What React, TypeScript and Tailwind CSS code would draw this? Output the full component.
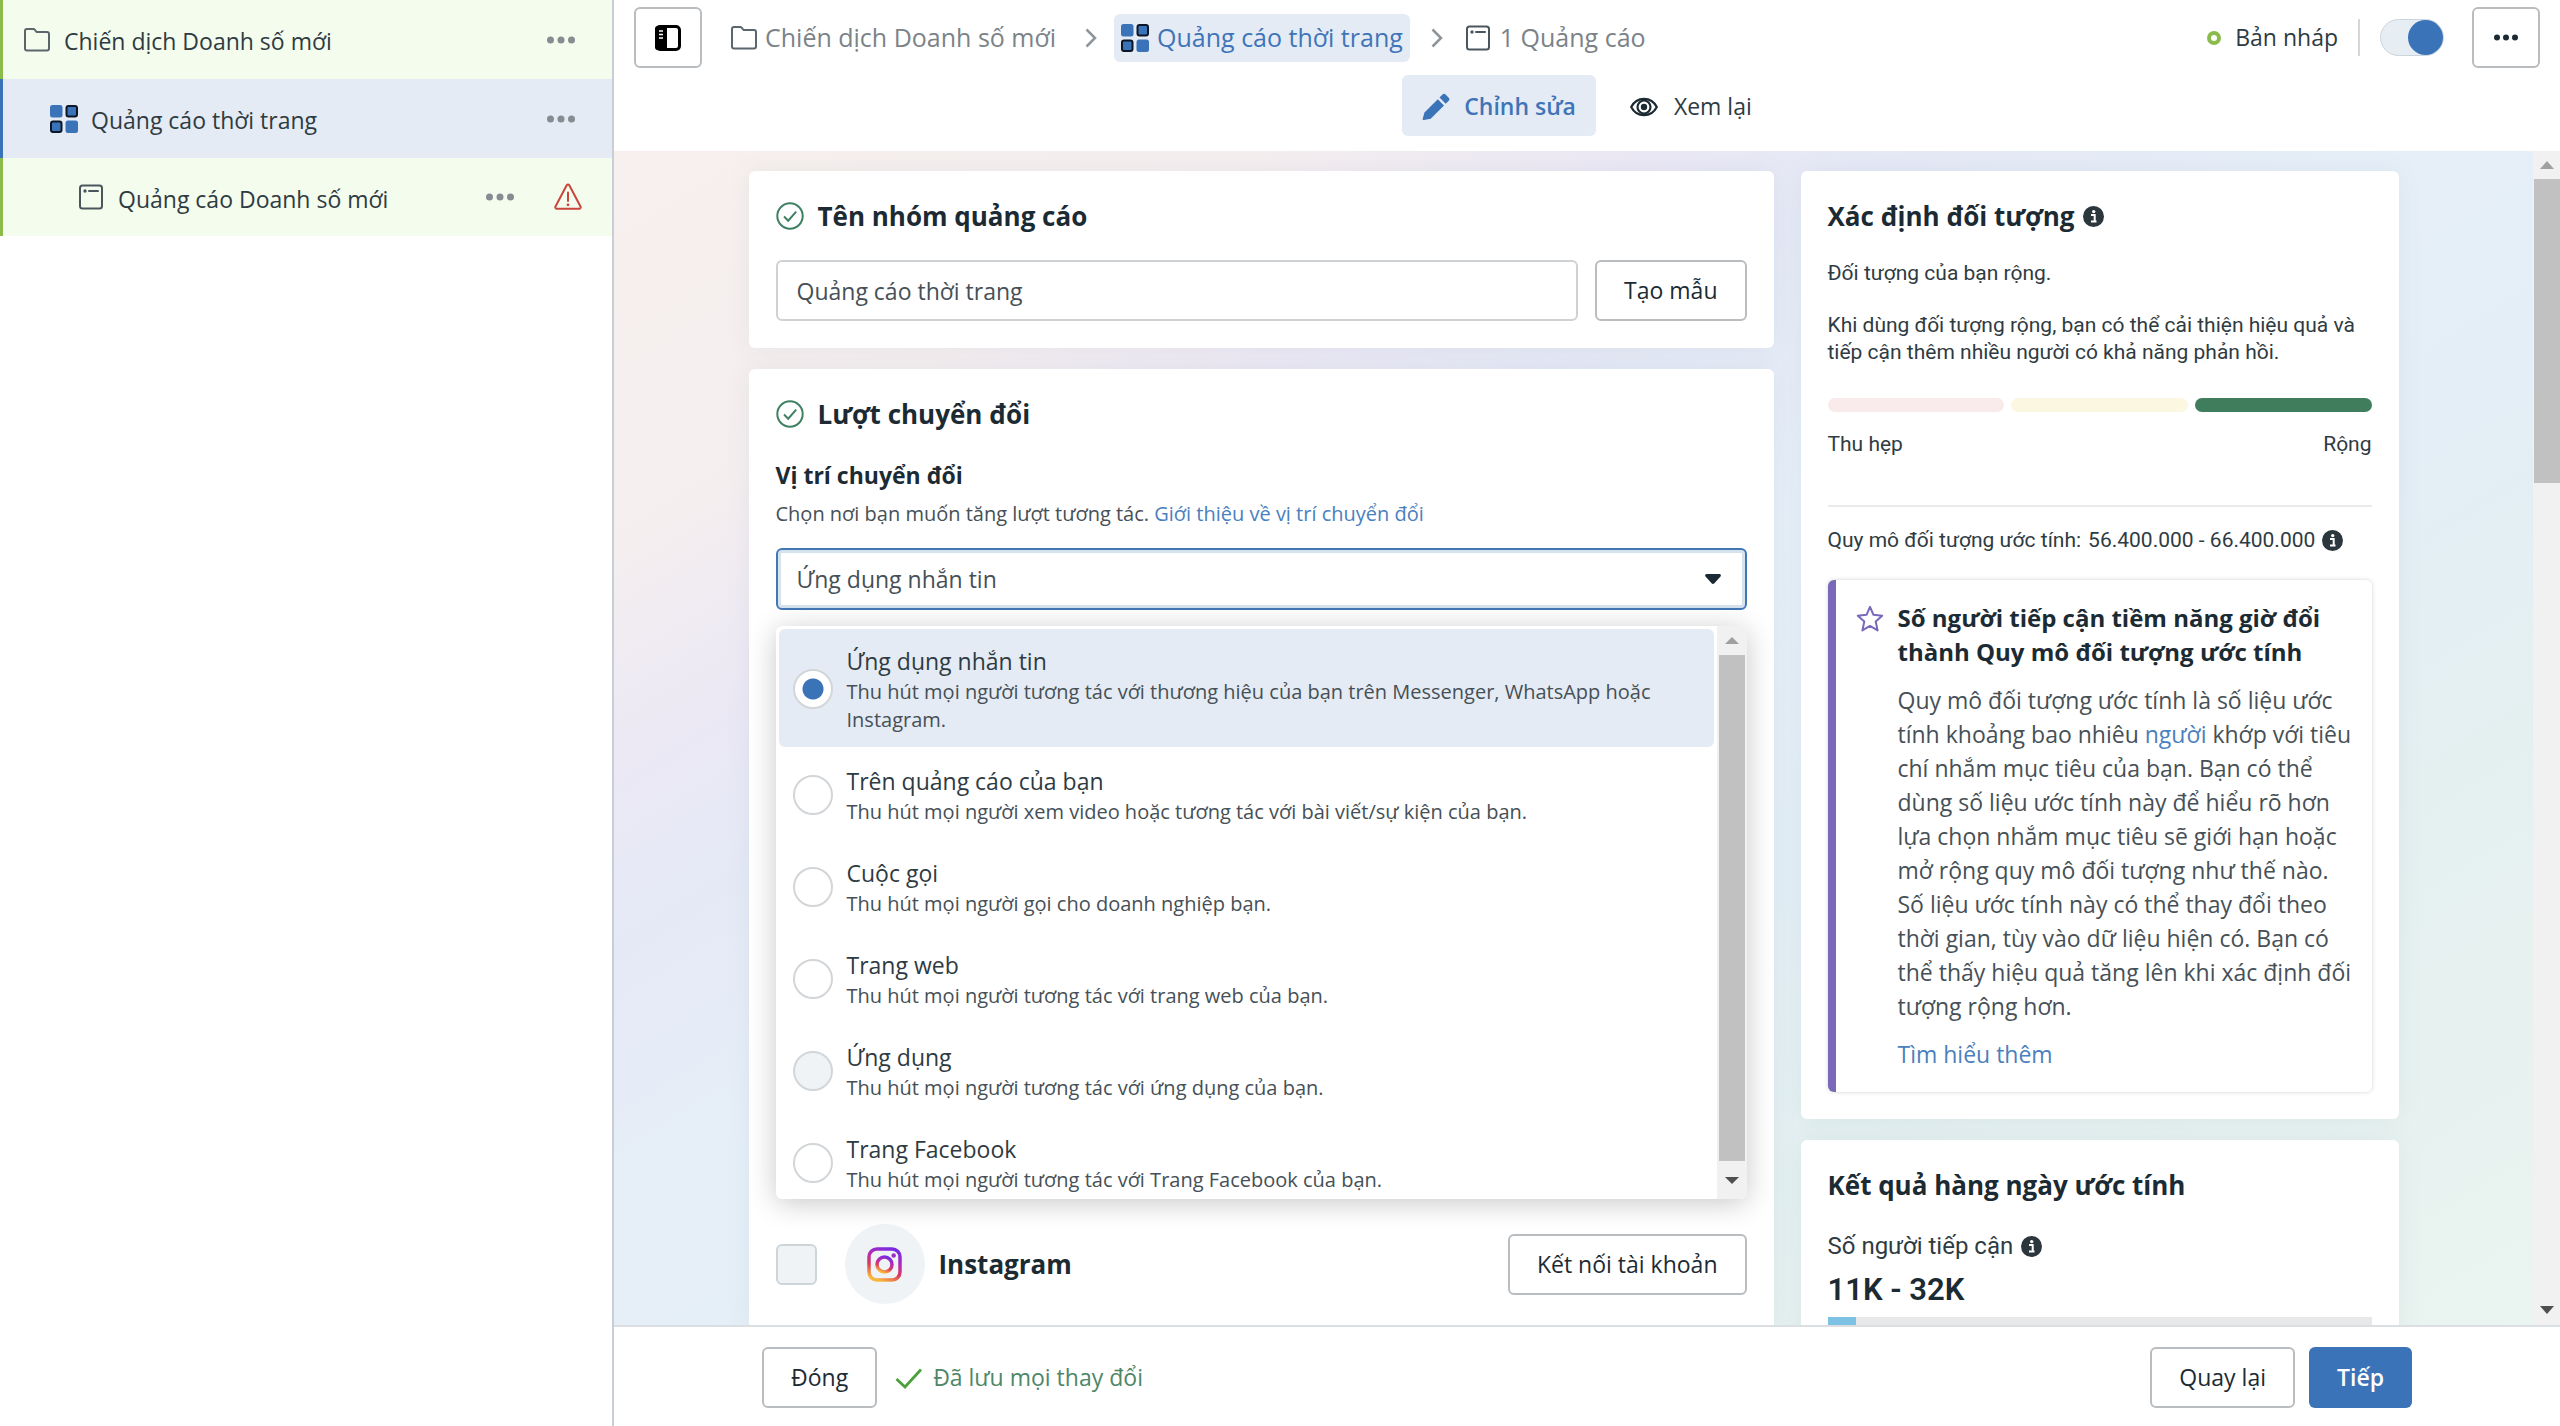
import { useState } from 'react';
import type { ReactNode } from 'react';

const OPTIONS = [
  {
    id: 'messaging',
    title: 'Ứng dụng nhắn tin',
    text: 'Thu hút mọi người tương tác với thương hiệu của bạn trên Messenger, WhatsApp hoặc Instagram.',
  },
  {
    id: 'on-ad',
    title: 'Trên quảng cáo của bạn',
    text: 'Thu hút mọi người xem video hoặc tương tác với bài viết/sự kiện của bạn.',
  },
  { id: 'calls', title: 'Cuộc gọi', text: 'Thu hút mọi người gọi cho doanh nghiệp bạn.' },
  { id: 'website', title: 'Trang web', text: 'Thu hút mọi người tương tác với trang web của bạn.' },
  { id: 'app', title: 'Ứng dụng', text: 'Thu hút mọi người tương tác với ứng dụng của bạn.', disabled: true },
  { id: 'page', title: 'Trang Facebook', text: 'Thu hút mọi người tương tác với Trang Facebook của bạn.' },
];

/* Icons */

function FolderIcon() {
  return (
    <svg className="w-7 h-7 shrink-0" viewBox="0 0 28 28" fill="none" stroke="#5b666c" strokeWidth="2" strokeLinejoin="round">
      <path d="M2 22.500V5a2 2 0 0 1 2-2h6.200a2 2 0 0 1 1.500.7L13.500 6H24a2 2 0 0 1 2 2v14.500a2 2 0 0 1-2 2H4a2 2 0 0 1-2-2Z" />
    </svg>
  );
}

function GridIcon() {
  return (
    <svg className="w-7 h-7 shrink-0" viewBox="0 0 28 28" fill="#3b73b9">
      <rect x="0" y="0" width="12.500" height="12.500" rx="2.500" />
      <rect x="16.500" y="1" width="10.500" height="10.500" rx="2" stroke="#0b1626" strokeWidth="2" />
      <rect x="1" y="16.500" width="10.500" height="10.500" rx="2" stroke="#0b1626" strokeWidth="2" />
      <rect x="15.500" y="15.500" width="12.500" height="12.500" rx="2.500" />
    </svg>
  );
}

function AdIcon() {
  return (
    <svg className="w-7 h-7 shrink-0" viewBox="0 0 28 28" fill="none" stroke="#4b565c" strokeWidth="2">
      <rect x="3" y="2.500" width="22" height="23" rx="2.500" />
      <circle cx="8" cy="8" r="1.700" fill="#4b565c" stroke="none" />
      <path d="M12 8h9" strokeLinecap="round" />
    </svg>
  );
}

function DotsIcon({ color, size }: { color: string; size: string }) {
  return (
    <svg className={`${size} shrink-0`} viewBox="0 0 28 8" fill={color}>
      <circle cx="3.500" cy="4" r="3.500" />
      <circle cx="14" cy="4" r="3.500" />
      <circle cx="24.500" cy="4" r="3.500" />
    </svg>
  );
}

function WarningIcon() {
  return (
    <svg className="w-7 h-7 shrink-0" viewBox="0 0 28 28" fill="none" stroke="#c9463d" strokeWidth="2" strokeLinejoin="round">
      <path d="M12.700 2.200a1.500 1.500 0 0 1 2.600 0l11.200 21.300a1.500 1.500 0 0 1-1.300 2.200H2.800a1.500 1.500 0 0 1-1.300-2.200Z" />
      <path d="M14 9.500v8.500" strokeLinecap="round" />
      <circle cx="14" cy="21.800" r="1.400" fill="#c9463d" stroke="none" />
    </svg>
  );
}

function PanelIcon() {
  return (
    <svg className="w-7 h-7" viewBox="0 0 28 28">
      <rect x="2.500" y="2.500" width="23" height="23" rx="3.500" fill="#fff" stroke="#000" strokeWidth="3" />
      <path d="M4 2h9v24H4a3 3 0 0 1-3-3V5a3 3 0 0 1 3-3Z" fill="#000" />
      <path d="M5 7h4M5 10.500h4M5 14h4" stroke="#fff" strokeWidth="1.600" />
    </svg>
  );
}

function ChevronIcon() {
  return (
    <svg className="w-3 h-5 shrink-0" viewBox="0 0 12 20" fill="none" stroke="#8d959a" strokeWidth="2.500">
      <path d="M1.500 1.500 10 10l-8.500 8.500" />
    </svg>
  );
}

function PencilIcon() {
  return (
    <svg className="w-7 h-7" viewBox="0 0 28 28" fill="#3b73b9">
      <path d="M2.500 19.500 15.800 6.200l6.200 6.200L8.700 25.700 1.800 27a1 1 0 0 1-1.100-1.200Z" />
      <path d="M17.500 4.500 20.300 1.700a2.500 2.500 0 0 1 3.500 0l2.700 2.700a2.500 2.500 0 0 1 0 3.500l-2.800 2.800Z" />
    </svg>
  );
}

function EyeIcon() {
  return (
    <svg className="w-7 h-7" viewBox="0 0 28 28" fill="none" stroke="#1c2b33" strokeWidth="2.200">
      <path d="M1.200 14C4 8.500 8.500 5.800 14 5.800S24 8.500 26.800 14C24 19.500 19.500 22.200 14 22.200S4 19.500 1.200 14Z" />
      <circle cx="14" cy="14" r="6.500" />
      <circle cx="14" cy="14" r="3.200" fill="#1c2b33" stroke="none" />
    </svg>
  );
}

function CheckCircleIcon() {
  return (
    <svg className="w-7 h-7 shrink-0" viewBox="0 0 28 28" fill="none" stroke="#3f8062" strokeWidth="2">
      <circle cx="14" cy="14" r="12.700" />
      <path d="m8 14.500 4.200 4.200 8-9" />
    </svg>
  );
}

function InfoIcon() {
  return (
    <svg className="w-[21px] h-[21px] shrink-0" viewBox="0 0 21 21">
      <circle cx="10.500" cy="10.500" r="10.500" fill="#2b373d" />
      <circle cx="10.700" cy="5.600" r="1.700" fill="#fff" />
      <path d="M8 9h3.700v6M8 15.500h5.500" stroke="#fff" strokeWidth="2" fill="none" />
    </svg>
  );
}

function StarIcon() {
  return (
    <svg className="w-7 h-7 shrink-0" viewBox="0 0 28 28" fill="none" stroke="#7a68bb" strokeWidth="2" strokeLinejoin="round">
      <path d="m14 1.800 3.500 8 8.700.9-6.500 5.800 1.900 8.900-7.600-4.500-7.600 4.500 1.900-8.900-6.500-5.800 8.700-.9Z" />
    </svg>
  );
}

function InstagramIcon() {
  return (
    <svg className="w-[35px] h-[35px]" viewBox="0 0 35 35" fill="none" stroke="url(#ig)" strokeWidth="3.500">
      <defs>
        <linearGradient id="ig" x1="0.700" y1="0" x2="0.300" y2="1">
          <stop offset="0" stopColor="#7a2be0" />
          <stop offset="0.350" stopColor="#b52bb5" />
          <stop offset="0.650" stopColor="#dd3a5c" />
          <stop offset="1" stopColor="#f8b83c" />
        </linearGradient>
      </defs>
      <rect x="2" y="2" width="31" height="31" rx="8" />
      <circle cx="17.500" cy="17.500" r="7.500" />
      <circle cx="26.700" cy="8.500" r="2.200" fill="#a02bc8" stroke="none" />
    </svg>
  );
}

/* Shared parts */

function Card({ children }: { children: ReactNode }) {
  return <section className="bg-white rounded-md p-[27px] shadow-[0_0_24px_rgba(90,110,140,0.08)]">{children}</section>;
}

function OutlineButton({ children }: { children: ReactNode }) {
  return (
    <button className="h-[61px] px-[27px] shrink-0 rounded-md border-2 border-[#b9bdc0] bg-white text-[23px] font-medium text-[#1c2b33]">
      {children}
    </button>
  );
}

function SectionTitle({ children }: { children: ReactNode }) {
  return (
    <h2 className="flex items-center gap-[14px] h-9 text-[26px] font-bold text-[#1c2b33]">
      <CheckCircleIcon />
      {children}
    </h2>
  );
}

function Sidebar() {
  return (
    <nav className="w-[614px] shrink-0 border-r-2 border-[#c8ced6] bg-white text-[23px] text-[#2f3b42]">
      <div className="flex items-center h-[79px] border-l-3 border-[#8abb4b] bg-[#f4fcee] pl-5 pr-[37px]">
        <FolderIcon />
        <a href="#campaign" className="ml-[13px] pt-1 flex-1">Chiến dịch Doanh số mới</a>
        <button aria-label="Tùy chọn chiến dịch"><DotsIcon color="#858d92" size="w-7 h-2" /></button>
      </div>
      <div className="flex items-center h-[79px] border-l-3 border-[#3b73b9] bg-[#e4ebf4] pl-[47px] pr-[37px]">
        <GridIcon />
        <a href="#adset" className="ml-[13px] pt-1 flex-1">Quảng cáo thời trang</a>
        <button aria-label="Tùy chọn nhóm quảng cáo"><DotsIcon color="#858d92" size="w-7 h-2" /></button>
      </div>
      <div className="flex items-center h-[78px] border-l-3 border-[#8abb4b] bg-[#f4fcee] pl-[74px] pr-[30px]">
        <AdIcon />
        <a href="#ad" className="ml-[13px] pt-1 flex-1">Quảng cáo Doanh số mới</a>
        <button aria-label="Tùy chọn quảng cáo"><DotsIcon color="#858d92" size="w-7 h-2" /></button>
        <span className="ml-[40px]"><WarningIcon /></span>
      </div>
    </nav>
  );
}

function Header() {
  return (
    <header className="h-[151px] shrink-0 bg-white px-5">
      <div className="flex items-center h-[75px]">
        <button aria-label="Thu gọn bảng" className="flex items-center justify-center w-[68px] h-[61px] rounded-md border-2 border-[#b9bdc0]">
          <PanelIcon />
        </button>
        <nav className="flex items-center ml-7 text-[25px] font-medium text-[#7b8388]">
          <a href="#campaign" className="flex items-center gap-[7px]">
            <FolderIcon />
            Chiến dịch Doanh số mới
          </a>
          <span className="mx-[17px] pl-3"><ChevronIcon /></span>
          <a href="#adset" className="flex items-center gap-2 h-12 px-[7px] rounded-md bg-[#e4ebf4] text-[#3f75b8]">
            <GridIcon />
            Quảng cáo thời trang
          </a>
          <span className="mx-5 px-px"><ChevronIcon /></span>
          <a href="#ad" className="flex items-center gap-2">
            <AdIcon />
            1 Quảng cáo
          </a>
        </nav>
        <div className="ml-auto flex items-center text-[23px] text-[#2f3b42]">
          <span className="w-[14px] h-[14px] rounded-full border-4 border-[#8abb4b] mr-[14px]" />
          Bản nháp
          <span className="w-[2px] h-[37px] bg-[#d3d7da] mx-5" />
          <input
            type="checkbox"
            role="switch"
            aria-label="Bật nhóm quảng cáo"
            defaultChecked
            className="appearance-none flex justify-end items-center w-16 h-[37px] rounded-full border border-[#cdd5dc] bg-[#e6edf3] before:w-[35px] before:h-[35px] before:rounded-full before:bg-[#3b73b9]"
          />
          <button aria-label="Tùy chọn khác" className="flex items-center justify-center w-[68px] h-[61px] ml-7 rounded-md border-2 border-[#b9bdc0]">
            <DotsIcon color="#1c2b33" size="w-6 h-[7px]" />
          </button>
        </div>
      </div>
      <div className="flex justify-center gap-[14px]">
        <button className="flex items-center gap-[14px] h-[61px] px-5 pt-[2px] rounded-md bg-[#e4ebf4] text-[23px] font-semibold text-[#3f75b8]">
          <PencilIcon />
          Chỉnh sửa
        </button>
        <button className="flex items-center gap-4 h-[61px] px-5 pt-[2px] rounded-md text-[23px] text-[#2f3b42]">
          <EyeIcon />
          Xem lại
        </button>
      </div>
    </header>
  );
}

function LocationMenu({ value, onChange }: { value: string; onChange: (id: string) => void }) {
  return (
    <div className="absolute left-0 right-0 top-[78px] z-10 flex h-[573px] overflow-hidden rounded-md bg-white shadow-[0_4px_28px_rgba(0,0,0,0.22)]">
      <div className="flex flex-col flex-1 gap-[2px] p-[3px] overflow-hidden">
        {OPTIONS.map((option) => (
          <label
            key={option.id}
            className={`flex items-center shrink-0 gap-[14px] pt-[15px] pb-[13px] pl-[14px] pr-10 rounded-md ${
              option.id === value ? 'bg-[#e4ebf4]' : ''
            }`}
          >
            <input
              type="radio"
              name="location"
              value={option.id}
              checked={option.id === value}
              disabled={option.disabled}
              onChange={() => onChange(option.id)}
              className="appearance-none w-10 h-10 shrink-0 rounded-full border-2 border-[#d3d6d9] bg-white checked:bg-[radial-gradient(circle,#3b73b9_10px,#ffffff_11px)] disabled:bg-[#eff3f6]"
            />
            <span className="flex flex-col">
              <span className="text-[23px] leading-[34px] text-[#2f3b42]">{option.title}</span>
              <span className="text-[20px] leading-7 text-[#465056]">{option.text}</span>
            </span>
          </label>
        ))}
      </div>
      <div className="flex flex-col items-center w-[30px] bg-[#f1f1f1]">
        <span className="flex items-center justify-center h-[29px]">
          <svg className="w-[14px] h-[7px]" viewBox="0 0 14 7" fill="#a0a0a0"><path d="m7 0 7 7H0Z" /></svg>
        </span>
        <span className="w-[26px] flex-1 bg-[#c1c1c1]" />
        <span className="flex items-center justify-center h-[38px]">
          <svg className="w-[14px] h-[7px]" viewBox="0 0 14 7" fill="#4f4f4f"><path d="m7 7 7-7H0Z" /></svg>
        </span>
      </div>
    </div>
  );
}

function EditForm() {
  const [name, setName] = useState('Quảng cáo thời trang');
  const [location, setLocation] = useState('messaging');

  return (
    <div className="flex flex-col gap-[21px]">
      <Card>
        <SectionTitle>Tên nhóm quảng cáo</SectionTitle>
        <div className="flex gap-[17px] mt-[26px]">
          <input
            type="text"
            aria-label="Tên nhóm quảng cáo"
            value={name}
            onChange={(e) => setName(e.target.value)}
            className="flex-1 min-w-0 h-[61px] px-[19px] rounded-md border-2 border-[#ced2d5] text-[23px] text-[#465056]"
          />
          <OutlineButton>Tạo mẫu</OutlineButton>
        </div>
      </Card>

      <Card>
        <SectionTitle>Lượt chuyển đổi</SectionTitle>
        <label htmlFor="location" className="block mt-[25px] text-[23px] leading-9 font-bold text-[#1c2b33]">Vị trí chuyển đổi</label>
        <p className="mt-[7px] text-[20px] leading-7 text-[#465056]">
          Chọn nơi bạn muốn tăng lượt tương tác.{' '}
          <a href="#help" className="text-[#4a80bd]">Giới thiệu về vị trí chuyển đổi</a>
        </p>
        <div className="relative mt-5">
          <select
            id="location"
            value={location}
            onChange={(e) => setLocation(e.target.value)}
            className="appearance-none block w-full h-[62px] px-[19px] rounded-md border-2 border-[#4377b3] bg-white text-[23px] text-[#465056] shadow-[inset_0_0_0_3px_#d5e3ef]"
          >
            {OPTIONS.map((option) => (
              <option key={option.id} value={option.id}>{option.title}</option>
            ))}
          </select>
          <svg className="absolute right-[26px] top-[26px] w-4 h-[10px] pointer-events-none" viewBox="0 0 16 10" fill="#1c2b33">
            <path d="M1.500 0h13a1.500 1.500 0 0 1 1 2.500L9.400 9.200a2 2 0 0 1-2.800 0L.5 2.500A1.500 1.500 0 0 1 1.500 0Z" />
          </svg>
          <LocationMenu value={location} onChange={setLocation} />
        </div>
        <div className="flex items-center mt-[614px]">
          <input
            id="instagram"
            type="checkbox"
            disabled
            className="appearance-none w-[41px] h-[41px] rounded-md border-2 border-[#ced5d9] bg-[#eff3f6]"
          />
          <span className="flex items-center justify-center w-20 h-20 ml-7 rounded-full bg-[#eff3f6]">
            <InstagramIcon />
          </span>
          <label htmlFor="instagram" className="flex-1 ml-[14px] text-[26px] font-bold text-[#1c2b33]">Instagram</label>
          <OutlineButton>Kết nối tài khoản</OutlineButton>
        </div>
      </Card>
    </div>
  );
}

function Insights() {
  return (
    <aside className="flex flex-col gap-[21px]">
      <Card>
        <h2 className="flex items-center gap-2 h-9 text-[26px] font-bold text-[#1c2b33]">
          Xác định đối tượng
          <InfoIcon />
        </h2>
        <div className="font-[Roboto,sans-serif] text-[21px] leading-[27px] text-[#2f3b42]">
          <p className="mt-[26px]">Đối tượng của bạn rộng.</p>
          <p className="mt-[25px]">Khi dùng đối tượng rộng, bạn có thể cải thiện hiệu quả và tiếp cận thêm nhiều người có khả năng phản hồi.</p>
          <div className="grid grid-cols-3 gap-[7px] mt-8">
            <span className="h-[14px] rounded-full bg-[#f9ebec]" />
            <span className="h-[14px] rounded-full bg-[#fbf7e1]" />
            <span className="h-[14px] rounded-full bg-[#3f7d5c]" />
          </div>
          <div className="flex justify-between mt-[19px]">
            <span>Thu hẹp</span>
            <span>Rộng</span>
          </div>
          <p className="flex items-center gap-[7px] mt-[47px] pt-5 border-t-2 border-[#e8eaeb]">
            <span>Quy mô đối tượng ước tính:</span>
            <span>56.400.000 - 66.400.000</span>
            <InfoIcon />
          </p>
        </div>
        <div className="flex gap-[14px] mt-[26px] pt-[21px] pb-[21px] pl-5 pr-4 rounded-md border-l-8 border-[#7a68bb] shadow-[0_0_4px_rgba(0,0,0,0.18)]">
          <span className="pt-1"><StarIcon /></span>
          <div className="flex-1 text-[23px] leading-[34px] text-[#465056]">
            <h3 className="text-[24px] font-bold text-[#1c2b33]">Số người tiếp cận tiềm năng giờ đổi thành Quy mô đối tượng ước tính</h3>
            <p className="mt-[14px]">
              Quy mô đối tượng ước tính là số liệu ước tính khoảng bao nhiêu <a href="#people" className="text-[#4a80bd]">người</a> khớp với tiêu chí
              nhắm mục tiêu của bạn. Bạn có thể dùng số liệu ước tính này để hiểu rõ hơn lựa chọn nhắm mục tiêu sẽ giới hạn hoặc mở rộng quy mô
              đối tượng như thế nào. Số liệu ước tính này có thể thay đổi theo thời gian, tùy vào dữ liệu hiện có. Bạn có thể thấy hiệu quả tăng
              lên khi xác định đối tượng rộng hơn.
            </p>
            <a href="#learn" className="block mt-[14px] text-[#4a80bd]">Tìm hiểu thêm</a>
          </div>
        </div>
      </Card>

      <Card>
        <h2 className="h-9 text-[26px] leading-9 font-bold text-[#1c2b33]">Kết quả hàng ngày ước tính</h2>
        <div className="font-[Roboto,sans-serif] text-[#2f3b42]">
          <p className="flex items-center gap-2 mt-[26px] text-[24px] leading-[34px]">
            Số người tiếp cận
            <InfoIcon />
          </p>
          <p className="mt-[10px] text-[31px] leading-[34px] font-semibold text-[#1c2b33]">11K - 32K</p>
          <div className="h-4 mt-[10px] bg-[#e6e8ea]">
            <div className="h-4 w-7 bg-[#7dc1e4]" />
          </div>
        </div>
      </Card>
    </aside>
  );
}

function Scrollbar() {
  return (
    <div className="flex flex-col items-center w-[27px] shrink-0 bg-[#f1f1f1]">
      <span className="flex items-center justify-center h-[28px]">
        <svg className="w-[14px] h-[10px]" viewBox="0 0 14 10" fill="#a0a0a0"><path d="m7 1 7 8H0Z" /></svg>
      </span>
      <span className="w-[26px] h-[304px] bg-[#c1c1c1]" />
      <span className="flex items-center justify-center h-[30px] mt-auto">
        <svg className="w-[14px] h-[10px]" viewBox="0 0 14 10" fill="#4f4f4f"><path d="m7 9 7-8H0Z" /></svg>
      </span>
    </div>
  );
}

function Footer() {
  return (
    <footer className="shrink-0 border-t-2 border-[#dcdfe2] bg-white pt-5 pb-[18px]">
      <div className="flex items-center max-w-[1650px] mx-auto">
        <OutlineButton>Đóng</OutlineButton>
        <svg className="w-7 h-7 ml-[18px]" viewBox="0 0 28 28" fill="none" stroke="#4ba03c" strokeWidth="2.800">
          <path d="m1.500 15 8.500 8L26 5.500" />
        </svg>
        <span className="ml-[10px] text-[23px] text-[#4e8768]">Đã lưu mọi thay đổi</span>
        <div className="flex gap-[14px] ml-auto">
          <OutlineButton>Quay lại</OutlineButton>
          <button className="h-[61px] px-7 rounded-md bg-[#3b73b9] text-[23px] font-semibold text-white">Tiếp</button>
        </div>
      </div>
    </footer>
  );
}

export default function App() {
  return (
    <div className="flex h-screen overflow-hidden bg-white font-['Open_Sans',sans-serif]">
      <Sidebar />
      <div className="flex flex-col flex-1 min-w-0">
        <Header />
        <div className="flex flex-1 min-h-0">
          <main className="flex-1 min-w-0 overflow-hidden pt-5 bg-[linear-gradient(to_bottom_right,#f7f0ee_0%,#f4eeef_17%,#ebe8f5_27%,#e5e9f6_34%,#e6eff8_46%,#e3eef6_60%,#e4f0f0_74%,#eaf4f0_100%)]">
            <div className="grid grid-cols-[minmax(0,1025fr)_minmax(0,598fr)] gap-[27px] items-start max-w-[1650px] mx-auto">
              <EditForm />
              <Insights />
            </div>
          </main>
          <Scrollbar />
        </div>
        <Footer />
      </div>
    </div>
  );
}
